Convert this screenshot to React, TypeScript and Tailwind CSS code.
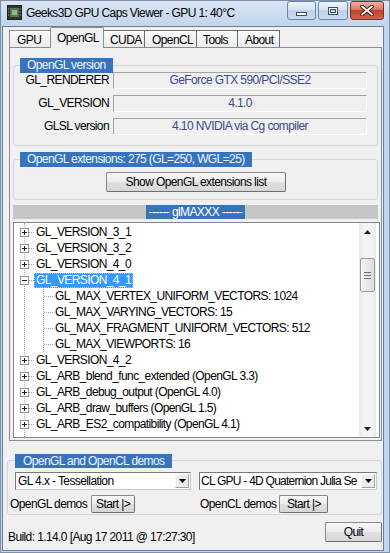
import React from "react";

const TREE = [
  { t: "GL_VERSION_3_1", k: "plus" },
  { t: "GL_VERSION_3_2", k: "plus" },
  { t: "GL_VERSION_4_0", k: "plus" },
  { t: "GL_VERSION_4_1", k: "minus", sel: true },
  { t: "GL_MAX_VERTEX_UNIFORM_VECTORS: 1024", k: "child" },
  { t: "GL_MAX_VARYING_VECTORS: 15", k: "child" },
  { t: "GL_MAX_FRAGMENT_UNIFORM_VECTORS: 512", k: "child" },
  { t: "GL_MAX_VIEWPORTS: 16", k: "child" },
  { t: "GL_VERSION_4_2", k: "plus" },
  { t: "GL_ARB_blend_func_extended (OpenGL 3.3)", k: "plus" },
  { t: "GL_ARB_debug_output (OpenGL 4.0)", k: "plus" },
  { t: "GL_ARB_draw_buffers (OpenGL 1.5)", k: "plus" },
  { t: "GL_ARB_ES2_compatibility (OpenGL 4.1)", k: "plus" },
];

const VERSION_ROWS = [
  ["GL_RENDERER", "GeForce GTX 590/PCI/SSE2"],
  ["GL_VERSION", "4.1.0"],
  ["GLSL version", "4.10 NVIDIA via Cg compiler"],
];

function ExpandBox({ open }: { open: boolean }) {
  return (
    <svg width="9" height="9" viewBox="0 0 9 9" className="block">
      <rect x="0.5" y="0.5" width="8" height="8" fill="#fff" stroke="#919191" />
      <path d="M2 4.5h5" stroke="#222" />
      {!open && <path d="M4.5 2v5" stroke="#222" />}
    </svg>
  );
}

function DownArrow() {
  return (
    <svg width="7" height="4" viewBox="0 0 7 4" className="block">
      <path d="M0 0h7L3.5 4z" fill="#000" />
    </svg>
  );
}

function WinButton({ className, children }: { className: string; children: React.ReactNode }) {
  return (
    <div
      className={
        "flex items-center justify-center rounded-[2px] border border-[#8a8a8a] border-b-[#6f6f6f] border-r-[#6f6f6f] bg-[linear-gradient(#f7f7f7,#ececec_50%,#e0e0e0_50%,#d6d6d6)] " +
        className
      }
    >
      {children}
    </div>
  );
}

function Combo({ w, text, tight }: { w: string; text: string; tight?: boolean }) {
  return (
    <div className={"flex h-[18px] border border-[#7a7a7a] border-b-[#c8c8c8] border-r-[#c8c8c8] bg-white " + w}>
      <div className={tight ? "flex-1 overflow-hidden pl-px leading-[16px] tracking-[-0.75px]" : "flex-1 overflow-hidden pl-[2px] leading-[16px]"}>
        {text}
      </div>
      <div className="m-px flex w-[14px] items-center justify-center border border-[#a0a0a0] border-l-[#f8f8f8] border-t-[#f8f8f8] bg-[#ececec]">
        <DownArrow />
      </div>
    </div>
  );
}

export default function App() {
  return (
    <div className="flex h-[553px] w-[390px] flex-col overflow-hidden whitespace-nowrap bg-[linear-gradient(to_bottom,#dae6f4,#c2d5ec_26px,#c3d6ec)] font-['Liberation_Sans',Arial,sans-serif] text-[12px] tracking-[-0.6px] text-black shadow-[inset_0_0_0_1px_#7d91ab]">
      {/* title bar */}
      <div className="flex h-[26px] shrink-0 items-start">
        <svg width="15" height="15" viewBox="0 0 15 15" className="ml-[7px] mt-[5px] block">
          <rect x="0.5" y="0.5" width="14" height="14" fill="#2e3430" stroke="#1b1f1c" />
          <rect x="3" y="3" width="9" height="9" fill="#4f7a55" />
          <rect x="5" y="5" width="5" height="5" fill="#8fb88f" />
          <path d="M1 4h1M1 7h1M1 10h1M13 4h1M13 7h1M13 10h1" stroke="#9aa39c" />
        </svg>
        <span className="ml-[4px] mt-[6px] leading-[14px]">Geeks3D GPU Caps Viewer - GPU 1: 40°C</span>
        <div className="ml-auto mr-[6px] mt-[1px] flex gap-[2px]">
          <div className="flex h-[19px] w-[29px] items-end justify-center rounded-[3px] border border-[#6b84a6] bg-[linear-gradient(#eef4fb,#d3e1f1_50%,#bed2ea_50%,#c9dbef)] pb-[3px]">
            <div className="h-[4px] w-[11px] border border-[#3d4d63] bg-white" />
          </div>
          <div className="flex h-[19px] w-[30px] items-center justify-center rounded-[3px] border border-[#6b84a6] bg-[linear-gradient(#eef4fb,#d3e1f1_50%,#bed2ea_50%,#c9dbef)]">
            <div className="h-[8px] w-[10px] border border-[#3d4d63] bg-white p-px">
              <div className="h-full w-full border border-[#3d4d63] bg-[#c9d8ea]" />
            </div>
          </div>
          <div className="flex h-[19px] w-[34px] items-center justify-center rounded-[3px] border border-[#7b2e24] bg-[linear-gradient(#eeb1a4,#d8705d_50%,#c3402a_50%,#d2654e)]">
            <svg width="14" height="11" viewBox="0 0 14 11" className="block">
              <path d="M2 1.5l10 8M12 1.5l-10 8" stroke="#3a0d08" strokeWidth="3.6" strokeLinecap="round" />
              <path d="M2 1.5l10 8M12 1.5l-10 8" stroke="#fff" strokeWidth="2" strokeLinecap="round" />
            </svg>
          </div>
        </div>
      </div>

      {/* client area */}
      <div className="ml-[2px] mr-[6px] flex h-[525px] shrink-0 flex-col border border-[#6d7f96] bg-[#f0f0f0]">
        {/* tabs */}
        <div className="relative z-10 -mb-px flex h-[21px] items-end pl-[6px]">
          <div className="mb-px flex h-[17px] w-[41px] items-center border-l border-t border-[#8c8e94] bg-[linear-gradient(#fbfbfb,#ebebeb)] pl-[7px] pt-[2px]">GPU</div>
          <div className="flex h-[21px] w-[54px] items-center rounded-t-[2px] border border-b-0 border-[#8c8e94] bg-[#f0f0f0] pl-[6px]">OpenGL</div>
          <div className="mb-px flex h-[17px] w-[41px] items-center border-r border-t border-[#6c6e74] bg-[linear-gradient(#fbfbfb,#ebebeb)] pl-[6px] pt-[2px]">CUDA</div>
          <div className="mb-px flex h-[17px] w-[52px] items-center border-r border-t border-[#6c6e74] bg-[linear-gradient(#fbfbfb,#ebebeb)] pl-[7px] pt-[2px]">OpenCL</div>
          <div className="mb-px flex h-[17px] w-[41px] items-center border-r border-t border-[#6c6e74] bg-[linear-gradient(#fbfbfb,#ebebeb)] pl-[6px] pt-[2px]">Tools</div>
          <div className="mb-px flex h-[17px] w-[42px] items-center border-r border-t border-[#6c6e74] bg-[linear-gradient(#fbfbfb,#ebebeb)] pl-[7px] pt-[2px]">About</div>
        </div>

        {/* tab page */}
        <div className="ml-[6px] mr-[1px] flex h-[394px] flex-col border border-[#898c95] bg-[#f0f0f0] pl-[3px] pr-[1px]">
          {/* OpenGL version */}
          <div className="relative mr-[2px] mt-[17px] h-[81px] rounded-[3px] border border-[#d0d7dd]">
            <div className="absolute -top-[8px] left-[6px] h-[15px] bg-[#3874bd] px-[7px] leading-[15px] text-[#eef4ff]">OpenGL version</div>
            <div className="flex flex-col gap-[6px] pt-[6px]">
              {VERSION_ROWS.map(([k, v]) => (
                <div key={k} className="flex h-[17px] items-center">
                  <div className="w-[95px] text-right leading-[17px]">{k}</div>
                  <div className="ml-[4px] h-[17px] w-[254px] border border-[#a4a4a4] border-b-white border-r-white text-center leading-[15px] text-[#3a4a8c]">{v}</div>
                </div>
              ))}
            </div>
          </div>

          {/* extensions */}
          <div className="relative mr-[2px] mt-[13px] h-[41px] rounded-[3px] border border-[#d0d7dd]">
            <div className="absolute -top-[8px] left-[6px] h-[15px] bg-[#3874bd] px-[7px] leading-[15px] text-[#eef4ff]">OpenGL extensions: 275 (GL=250, WGL=25)</div>
            <WinButton className="ml-[92px] mt-[12px] h-[20px] w-[180px]">Show OpenGL extensions list</WinButton>
          </div>

          {/* glMAXXX bar */}
          <div className="mr-[2px] mt-[5px] flex h-[14px] justify-center bg-[#c6c6c6]">
            <div className="w-[99px] bg-[#3874bd] text-center leading-[14px] text-white">------ glMAXXX ------</div>
          </div>

          {/* tree */}
          <div className="mt-[3px] flex h-[216px] border border-[#828790] bg-white">
            <div className="relative flex-1 overflow-hidden pt-px">
              <div className="absolute bottom-0 left-[10px] top-0 border-l border-dotted border-[#a0a0a0]" />
              <div className="absolute left-[29px] top-[57px] h-[72px] border-l border-dotted border-[#a0a0a0]" />
              {TREE.map((r) => (
                <div key={r.t} className="relative flex h-[16px] items-center">
                  {r.k === "child" ? (
                    <>
                      <div className="absolute left-[30px] top-[8px] w-[9px] border-t border-dotted border-[#a0a0a0]" />
                      <span className="ml-[41px] leading-[15px]">{r.t}</span>
                    </>
                  ) : (
                    <>
                      <div className="absolute left-[15px] top-[8px] w-[5px] border-t border-dotted border-[#a0a0a0]" />
                      <div className="relative ml-[6px]">
                        <ExpandBox open={r.k === "minus"} />
                      </div>
                      <span
                        className={
                          r.sel
                            ? "ml-[5px] h-[15px] border border-dotted border-[#9fcaf5] bg-[#3399ff] px-[1px] leading-[13px] text-white"
                            : "ml-[7px] leading-[15px]"
                        }
                      >
                        {r.t}
                      </span>
                    </>
                  )}
                </div>
              ))}
            </div>
            <div className="mr-[3px] flex w-[17px] flex-col bg-[linear-gradient(to_right,#e9e9e9,#f5f5f5_30%,#f5f5f5_70%,#e9e9e9)]">
              <div className="flex h-[17px] items-center justify-center">
                <svg width="7" height="4" viewBox="0 0 7 4" className="block">
                  <path d="M0 4h7L3.5 0z" fill="#222" />
                </svg>
              </div>
              <div className="flex-1 pt-[18px]">
                <div className="mx-px flex h-[34px] flex-col items-center justify-center gap-[2px] rounded-[2px] border border-[#9b9b9b] bg-[linear-gradient(to_right,#f4f4f4,#e9e9e9_50%,#dadada)]">
                  <div className="h-px w-[7px] bg-[#6e6e6e]" />
                  <div className="h-px w-[7px] bg-[#6e6e6e]" />
                  <div className="h-px w-[7px] bg-[#6e6e6e]" />
                </div>
              </div>
              <div className="flex h-[17px] items-center justify-center">
                <svg width="7" height="4" viewBox="0 0 7 4" className="block">
                  <path d="M0 0h7L3.5 4z" fill="#222" />
                </svg>
              </div>
            </div>
          </div>
        </div>

        {/* demos */}
        <div className="relative ml-[4px] mr-[1px] mt-[19px] h-[55px] rounded-[3px] border border-[#d0d7dd]">
          <div className="absolute -top-[7px] left-[7px] h-[14px] bg-[#3874bd] px-[8px] leading-[14px] text-[#eef4ff]">OpenGL and OpenCL demos</div>
          <div className="ml-[7px] mt-[11px] flex gap-[8px]">
            <Combo w="w-[176px]" text="GL 4.x - Tessellation" />
            <Combo w="w-[178px]" text="CL GPU - 4D Quaternion Julia Se" tight />
          </div>
          <div className="mt-[5px] flex h-[18px]">
            <div className="flex w-[191px] items-center">
              <span className="pl-[2px]">OpenGL demos</span>
              <WinButton className="ml-[4px] h-[18px] w-[44px]">Start |&gt;</WinButton>
            </div>
            <div className="flex items-center">
              <span className="pl-[1px]">OpenCL demos</span>
              <WinButton className="ml-[3px] h-[18px] w-[49px]">Start |&gt;</WinButton>
            </div>
          </div>
        </div>

        {/* footer */}
        <div className="mt-[7px] flex items-start pl-[5px] pr-[1px]">
          <span className="mt-[8px] leading-[14px]">Build: 1.14.0 [Aug 17 2011 @ 17:27:30]</span>
          <WinButton className="ml-auto h-[20px] w-[57px]">Quit</WinButton>
        </div>
      </div>
    </div>
  );
}
